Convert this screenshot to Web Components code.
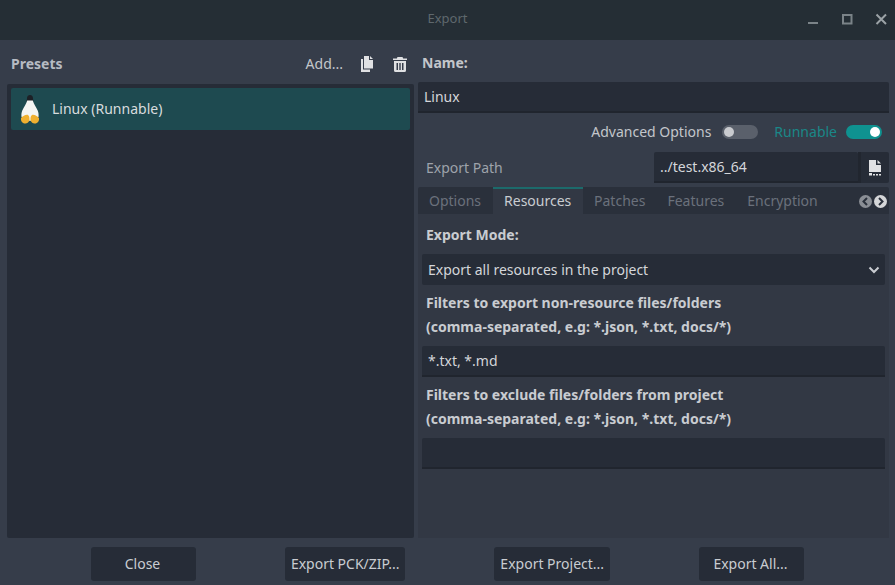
<!DOCTYPE html>
<html>
<head>
<meta charset="utf-8">
<title>Export</title>
<style>
  html, body { margin: 0; height: 100%; background: #363d4a; }
  body { font: 14px/20px "Noto Sans", sans-serif; color: #d0d3d8; overflow: hidden; }
</style>
</head>
<body>
<export-dialog></export-dialog>

<script>
// small helper, every element is just a template + shadow root
function comp(name, html) {
  const tpl = document.createElement('template');
  tpl.innerHTML = html;
  class C extends HTMLElement {
    constructor() {
      super();
      this.attachShadow({ mode: 'open' }).appendChild(tpl.content.cloneNode(true));
    }
  }
  customElements.define(name, C);
}

const ICON_DOCS = `<svg style="margin-right:1px" width="14" height="16" viewBox="0 0 14 16"><path fill="#e0e1e3" d="M4 0h5v4h4v8.500H4z"/><path fill="#e0e1e3" d="M10 0l3 3h-3z"/><path fill="#e0e1e3" d="M1 3h2v10.500h7V16H1z"/></svg>`;
const ICON_TRASH = `<svg width="16" height="16" viewBox="0 0 16 16"><path fill="#e0e1e3" d="M5.500 1h5l.7 1.500H15V4H1V2.500h3.800z"/><path fill="#e0e1e3" fill-rule="evenodd" d="M2 5h12v9.500a1.500 1.500 0 0 1-1.500 1.500h-9A1.500 1.500 0 0 1 2 14.500zM4.500 7v7H6V7zM7.300 7v7h1.400V7zM10 7v7h1.500V7z"/></svg>`;
const ICON_FILE = `<svg width="14" height="16" viewBox="0 0 14 16"><path fill="#e0e1e3" d="M1 0h7v5h5v7H1z"/><path fill="#e0e1e3" d="M9.500 0L13 3.500H9.500z"/><path fill="#e0e1e3" d="M1 13h3v2.500H1zM5 14h2v1.500H5zM8 14h2v1.500H8zM11 14h2v1.500h-2z"/></svg>`;
const ICON_TUX = `<svg width="22" height="30" viewBox="0 0 22 30">
  <path fill="#1d2026" d="M11 1c1.900 0 3 1.400 3 3.400 0 1.300.2 2.200.7 3.100H7.300c.5-.9.700-1.800.7-3.100C8 2.400 9.100 1 11 1z"/>
  <path fill="#f5f5f3" d="M8.200 6.500h5.600c.8 3.300 3.400 6.400 4.900 10 .8 2 1.100 4 .8 6.500L11 27l-8.500-4c-.3-2.500 0-4.500.8-6.500 1.500-3.600 4.100-6.700 4.900-10z"/>
  <path fill="#f0b030" d="M2 24c1.500-1.500 4-3.200 6-3.200 2 0 2.500 2.700 2.500 4.700 0 2.500-2.500 4-4.500 4-2.500 0-4.500-2.500-4-5.500zM20 24c-1.500-1.500-4-3.200-6-3.200-2 0-2.500 2.700-2.500 4.700 0 2.500 2.500 4 4.500 4 2.500 0 4.500-2.500 4-5.500z"/>
</svg>`;

comp('title-bar', `
<style>
  :host { display: flex; align-items: center; justify-content: center; box-sizing: border-box; height: 40px; padding-bottom: 4px; background: #252e35; position: relative; color: #5f686d; font-size: 13px; }
  .btns { position: absolute; right: 5px; top: 0; height: 38px; display: flex; align-items: center; gap: 15px; }
  svg { display: block; }
</style>
<slot></slot>
<div class="btns">
  <svg width="18" height="18" viewBox="0 0 18 18"><path fill="#7b8388" d="M4 12h10v2H4z"/></svg>
  <svg width="18" height="18" viewBox="0 0 18 18" style="margin-right:2px"><path fill="none" stroke="#7b8388" stroke-width="2" d="M6 5h8.500v8.500H6z"/></svg>
  <svg width="18" height="18" viewBox="0 0 18 18"><path fill="none" stroke="#9ba2a6" stroke-width="2" d="M4.500 4.500l9.500 9.500M14 4.500L4.500 14"/></svg>
</div>`);

comp('ed-button', `
<style>
  :host { display: flex; align-items: center; justify-content: center; box-sizing: border-box; height: 34px; min-width: 105px; padding: 0 6px; background: #262c37; border-radius: 3px; color: #c9ccd1; }
  :host([nudge]) { padding-right: 8px; }
</style>
<slot></slot>`);

comp('ed-field', `
<style>
  :host { display: flex; align-items: center; box-sizing: border-box; height: 31px; padding: 0 6px; background: #262c37; border-bottom: 2px solid #20252e; border-radius: 2px 2px 0 0; color: #d4d6da; }
</style>
<slot></slot>`);

comp('ed-select', `
<style>
  :host { display: flex; align-items: center; justify-content: space-between; box-sizing: border-box; height: 31px; padding: 0 5px 0 6px; background: #262c37; border-radius: 2px; color: #d4d6da; }
  svg { display: block; }
</style>
<slot></slot>
<svg width="12" height="8" viewBox="0 0 12 8"><path fill="none" stroke="#c9ccd1" stroke-width="2" d="M1.500 1.500L6 6l4.500-4.500"/></svg>`);

comp('ed-toggle', `
<style>
  :host { display: flex; align-items: center; gap: 11px; color: #c3c6cb; }
  :host([on]) { color: #1a8888; gap: 9px; }
  .track { position: relative; width: 36px; height: 14px; border-radius: 7px; background: #5a606b; }
  :host([on]) .track { background: #0f9290; }
  .knob { position: absolute; left: 2px; top: 2px; width: 10px; height: 10px; background: #c9cbcf; border-radius: 50%; }
  :host([on]) .knob { left: auto; right: 2px; background: #fff; }
</style>
<slot></slot>
<div class="track"><div class="knob"></div></div>`);

comp('preset-item', `
<style>
  :host { display: flex; align-items: center; height: 42px; background: #1e4a50; border-radius: 2px; color: #d8dcde; }
  .ic { width: 22px; margin-left: 8px; margin-right: 11px; display: flex; }
</style>
<div class="ic">${ICON_TUX}</div>
<slot></slot>`);

comp('presets-panel', `
<style>
  :host { display: flex; flex-direction: column; width: 407px; flex: none; }
  .head { height: 44px; box-sizing: border-box; padding: 14px 4px 0 4px; display: flex; align-items: flex-start; justify-content: space-between; }
  .head b { color: #b6bbc3; font-weight: 700; line-height: 20px; }
  .tools { display: flex; align-items: center; gap: 17px; height: 20px; color: #c3c6cb; margin-right: 2px; }
  .tools svg { display: block; }
  .list { flex: 1; background: #262c37; border-radius: 2px; padding: 4px; }
</style>
<div class="head">
  <b>Presets</b>
  <div class="tools"><span>Add...</span>${ICON_DOCS}${ICON_TRASH}</div>
</div>
<div class="list"><slot></slot></div>`);

comp('ed-tabs', `
<style>
  :host { display: block; }
  .bar { display: flex; align-items: stretch; height: 27px; background: #2a303b; border-radius: 2px 2px 0 0; }
  .t { padding: 2px 11px 0; line-height: 23px; color: #6b717c; }
  .t.on { color: #c9ccd1; background: #323844; border-top: 2px solid #1c6a6b; padding: 0 11px 0 11px; width: 68px; }
  .t.f { padding-right: 12px; }
  .arrows { margin-left: auto; display: flex; align-items: center; gap: 2px; padding: 1px 2px 0 0; }
  svg { display: block; }
</style>
<div class="bar">
  <div class="t f">Options</div>
  <div class="t on">Resources</div>
  <div class="t">Patches</div>
  <div class="t f">Features</div>
  <div class="t">Encryption</div>
  <div class="arrows">
    <svg width="13" height="13" viewBox="0 0 13 13"><circle cx="6.500" cy="6.500" r="6.500" fill="#8a8e95"/><path fill="none" stroke="#2a303b" stroke-width="2" d="M8 3L4.500 6.500 8 10"/></svg>
    <svg width="13" height="13" viewBox="0 0 13 13"><circle cx="6.500" cy="6.500" r="6.500" fill="#d5d6d8"/><path fill="none" stroke="#2a303b" stroke-width="2" d="M5 3l3.500 3.500L5 10"/></svg>
  </div>
</div>
<slot></slot>`);

comp('resources-tab', `
<style>
  :host { display: flex; flex-direction: column; box-sizing: border-box; height: 324px; padding: 9px 4px 0; background: #323844; }
  .lab { padding-left: 4px; font-weight: 700; line-height: 24px; color: #c9ccd1; }
  .lab + * { margin-top: 7px; }
  ed-select + .lab, ed-field + .lab { margin-top: 6px; }
</style>
<div class="lab">Export Mode:</div>
<ed-select>Export all resources in the project</ed-select>
<div class="lab">Filters to export non-resource files/folders<br>(comma-separated, e.g: *.json, *.txt, docs/*)</div>
<ed-field>*.txt, *.md</ed-field>
<div class="lab">Filters to exclude files/folders from project<br>(comma-separated, e.g: *.json, *.txt, docs/*)</div>
<ed-field></ed-field>`);

comp('export-options', `
<style>
  :host { display: flex; flex-direction: column; flex: 1; min-width: 0; }
  .name { height: 42px; box-sizing: border-box; padding: 13px 0 0 4px; font-weight: 700; color: #c3c6cb; }
  .row { display: flex; align-items: center; justify-content: flex-end; gap: 16px; height: 39px; padding-right: 7px; padding-bottom: 1px; box-sizing: border-box; }
  .path { display: flex; align-items: center; height: 31px; margin-bottom: 4px; }
  .path .lb { padding-left: 8px; width: 228px; color: #9ea3ab; }
  .path ed-field { width: 204px; }
  .browse { border-left: 3px solid #21262f; width: 28px; height: 31px; background: #262c37; border-radius: 0 2px 2px 0; display: flex; align-items: center; justify-content: center; }
  svg { display: block; }
</style>
<div class="name">Name:</div>
<ed-field>Linux</ed-field>
<div class="row">
  <ed-toggle>Advanced Options</ed-toggle>
  <ed-toggle on>Runnable</ed-toggle>
</div>
<div class="path">
  <div class="lb">Export Path</div>
  <ed-field>../test.x86_64</ed-field>
  <div class="browse">${ICON_FILE}</div>
</div>
<ed-tabs><resources-tab></resources-tab></ed-tabs>`);

comp('export-dialog', `
<style>
  :host { display: flex; flex-direction: column; width: 895px; height: 585px; }
  main { display: flex; gap: 4px; padding: 0 6px 0 7px; height: 498px; }
  footer { display: flex; justify-content: space-between; padding: 9px 91px 0; }
</style>
<title-bar>Export</title-bar>
<main>
  <presets-panel><preset-item>Linux (Runnable)</preset-item></presets-panel>
  <export-options></export-options>
</main>
<footer>
  <ed-button nudge>Close</ed-button>
  <ed-button>Export PCK/ZIP...</ed-button>
  <ed-button>Export Project...</ed-button>
  <ed-button nudge>Export All...</ed-button>
</footer>`);
</script>
</body>
</html>
